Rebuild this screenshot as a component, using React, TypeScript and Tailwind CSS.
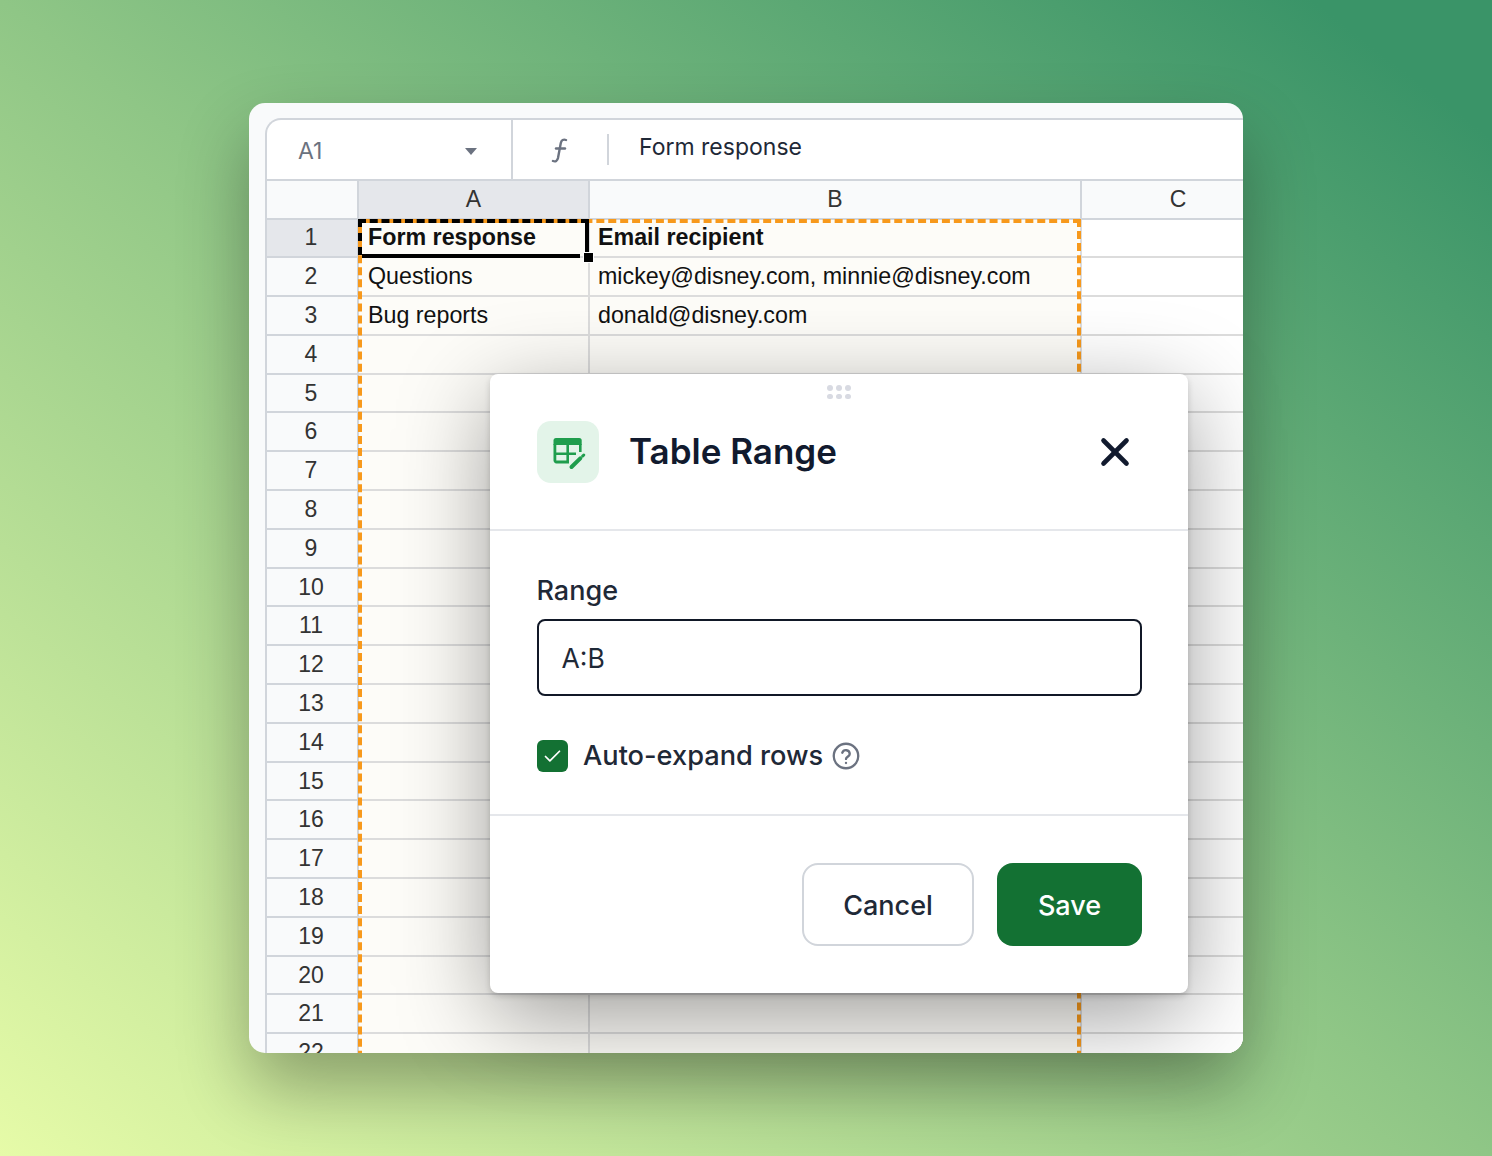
import { Check, X } from "lucide-react";

const rows = Array.from({ length: 22 }, (_, i) => i + 1);

const cells: Record<number, [string, string]> = {
  1: ["Form response", "Email recipient"],
  2: ["Questions", "mickey@disney.com, minnie@disney.com"],
  3: ["Bug reports", "donald@disney.com"],
};

function SheetRow({ n }: { n: number }) {
  const cell = cells[n];
  return (
    <div className="flex h-[38.8px] shrink-0 text-[23.25px] leading-none text-[#111111]">
      <div className={`flex w-[92px] shrink-0 items-center justify-center border-r-2 border-b-2 border-[#d1d5db] pr-[2px] text-[23px] text-[#333333] ${n === 1 ? "bg-[#e5e7eb]" : "bg-[#f9fafb]"}`}>
        {n}
      </div>
      <div className={`flex w-[231px] shrink-0 items-center border-r-2 border-b-2 border-[#dcdcdc] bg-[#fdfcf8] pl-[9px] ${n === 1 ? "font-bold" : ""}`}>
        {cell?.[0]}
      </div>
      <div className={`flex w-[492px] shrink-0 items-center border-r-2 border-b-2 border-[#dcdcdc] bg-[#fdfcf8] pl-[8px] ${n === 1 ? "font-bold" : ""}`}>
        {cell?.[1]}
      </div>
      <div className="w-[192px] shrink-0 border-b-2 border-[#dcdcdc] bg-white" />
    </div>
  );
}

function Sheet() {
  return (
    <div className="relative ml-[16px] mt-[15px] flex h-[935px] flex-col overflow-hidden rounded-tl-[16px] border-t-2 border-l-2 border-[#d1d5db] bg-white font-['Liberation_Sans',sans-serif]">
      <div className="flex h-[61px] shrink-0 border-b-2 border-[#d1d5db]">
        <div className="flex w-[246px] items-center justify-between border-r-2 border-[#d1d5db] pt-[3px] pl-[31px] pr-[34px] font-['Inter',sans-serif] text-[23px] text-[#6b7280]">
          <span>A1</span>
          <span className="h-0 w-0 border-x-[6px] border-t-[7px] border-x-transparent border-t-[#6b7280]" />
        </div>
        <div className="flex w-[94px] items-center justify-center pl-[2px]">
          <svg width="20" height="26" viewBox="0 0 20 26" fill="none" stroke="#6b7280" strokeWidth="2.400" strokeLinecap="round">
            <path d="M2 24c2.500 1 4.400-.2 5-3l2.800-15c.6-2.800 2.600-4 5.200-3" />
            <path d="M5 11.500h9" />
          </svg>
        </div>
        <div className="my-[14px] w-[2px] bg-[#d1d5db]" />
        <div className="-mt-[4px] flex items-center pl-[30px] font-['Inter',sans-serif] text-[23px] text-[#1f2937]">
          Form response
        </div>
      </div>

      <div className="flex h-[38.5px] shrink-0 border-b-2 border-[#d1d5db] text-[23px] text-[#333333]">
        <div className="w-[92px] shrink-0 border-r-2 border-[#d1d5db] bg-[#f9fafb]" />
        <div className="flex w-[231px] shrink-0 items-center justify-center border-r-2 border-[#d1d5db] bg-[#e5e7eb]">A</div>
        <div className="flex w-[492px] shrink-0 items-center justify-center border-r-2 border-[#d1d5db] bg-[#f9fafb]">B</div>
        <div className="flex w-[192px] shrink-0 items-center justify-center bg-[#f9fafb]">C</div>
      </div>

      {rows.map((n) => (
        <SheetRow key={n} n={n} />
      ))}

      {/* selection overlays */}
      <div className="absolute top-[99px] left-[91px] h-[900px] w-[723px] border-4 border-dashed border-[#f7991c]" />
      <div className="absolute top-[99px] left-[91px] h-[4px] w-[231px] border-t-4 border-dashed border-black bg-[#f7991c]" />
      <div className="absolute top-[99px] left-[91px] h-[36px] w-[4px] border-l-4 border-dashed border-black bg-[#f7991c]" />
      <div className="absolute top-[134px] left-[95px] h-[4px] w-[218px] bg-black" />
      <div className="absolute top-[99px] left-[318px] h-[36px] w-[4px] bg-black" />
      <div className="absolute top-[132px] left-[316px] h-[11px] w-[11px] border border-white bg-black" />
    </div>
  );
}

function TableEditIcon() {
  return (
    <svg width="36" height="36" viewBox="0 0 36 36" fill="none">
      <path d="M6 4h23.200a2.500 2.500 0 0 1 2.500 2.500V11H3.500V6.500A2.500 2.500 0 0 1 6 4Z" fill="#1f9d4d" />
      <path d="M4.900 10v16.500a1.500 1.500 0 0 0 1.500 1.500H19" stroke="#1f9d4d" strokeWidth="2.800" />
      <path d="M17.700 10v18M4.900 19.700H26M30.300 10v8" stroke="#1f9d4d" strokeWidth="2.600" />
      <path d="M21.500 33 30.300 24.300" stroke="#1f9d4d" strokeWidth="4" strokeLinecap="round" />
      <path d="M32.600 22.100 33.800 21" stroke="#1f9d4d" strokeWidth="3" strokeLinecap="round" />
    </svg>
  );
}

function Modal() {
  return (
    <div className="absolute top-[271px] left-[241px] flex h-[619px] w-[698px] flex-col rounded-[8px] bg-white font-['Inter',sans-serif] shadow-[0_24px_90px_rgba(0,0,0,0.38),0_3px_6px_rgba(0,0,0,0.16)]">
      <div className="relative flex h-[157px] shrink-0 items-center border-b-2 border-[#e5e7eb] px-[47px] pt-[1px]">
        <div className="absolute top-[11px] left-[337px] grid grid-cols-3 gap-x-[3.500px] gap-y-[3px]">
          {[0, 1, 2, 3, 4, 5].map((d) => (
            <span key={d} className="h-[5.500px] w-[5.500px] rounded-full bg-[#d8dae2]" />
          ))}
        </div>
        <div className="flex h-[62px] w-[62px] items-center justify-center rounded-[14px] bg-[#e3f4e9]">
          <TableEditIcon />
        </div>
        <span className="-mt-[2px] ml-[30px] flex-1 text-[35px] font-semibold leading-none text-[#111a2e]">Table Range</span>
        <X className="mr-[3px] h-[46px] w-[46px] text-[#111a2e]" strokeWidth={2.400} />
      </div>

      <div className="flex h-[285px] shrink-0 flex-col border-b-2 border-[#e5e7eb] px-[46.500px] pt-[43px]">
        <label className="text-[27px] font-medium leading-[33px] text-[#1f2937]">Range</label>
        <div className="mt-[12px] flex h-[77px] items-center rounded-[8px] border-2 border-[#111827] pl-[23px] pt-[2px] text-[26.500px] text-[#1f2937]">
          A:B
        </div>
        <div className="mt-[44px] flex items-center">
          <span className="flex h-[32px] w-[31.500px] items-center justify-center rounded-[6px] bg-[#137133]">
            <Check className="h-[21px] w-[21px] text-white" strokeWidth={2} />
          </span>
          <span className="ml-[15px] text-[27.200px] font-medium leading-none text-[#1f2937]">Auto-expand rows</span>
          <svg className="ml-[9px]" width="28" height="28" viewBox="0 0 24 24" fill="none" stroke="#6b7280" strokeWidth="2" strokeLinecap="round" strokeLinejoin="round">
            <circle cx="12" cy="12" r="10.500" />
            <path d="M8.800 9.200a3.300 3.300 0 0 1 6.400 1c0 2.200-3.200 2.600-3.200 4.300" />
            <path d="M12 18h.01" />
          </svg>
        </div>
      </div>

      <div className="flex flex-1 items-start justify-end gap-[23px] px-[46px] pt-[47px]">
        <button className="h-[83px] w-[172px] rounded-[16px] border-2 border-[#d1d5db] bg-white pt-[3px] text-[27px] font-medium text-[#1f2937]">
          Cancel
        </button>
        <button className="h-[83px] w-[145px] rounded-[16px] bg-[#137133] pt-[3px] text-[27px] font-medium text-white">
          Save
        </button>
      </div>
    </div>
  );
}

export default function App() {
  return (
    <div className="flex h-[1156px] w-[1492px] items-start overflow-hidden bg-[linear-gradient(to_bottom_left,#3a9468_6%,#8fc686_50%,#e6fba8_100%)] pl-[249px] pt-[103px]">
      <div className="relative h-[950px] w-[994px] rounded-[16px] bg-[#f9fafb] shadow-[0_34px_70px_rgba(0,0,0,0.32)]">
        <div className="h-full w-full overflow-hidden rounded-[16px]">
          <Sheet />
        </div>
        <Modal />
      </div>
    </div>
  );
}
